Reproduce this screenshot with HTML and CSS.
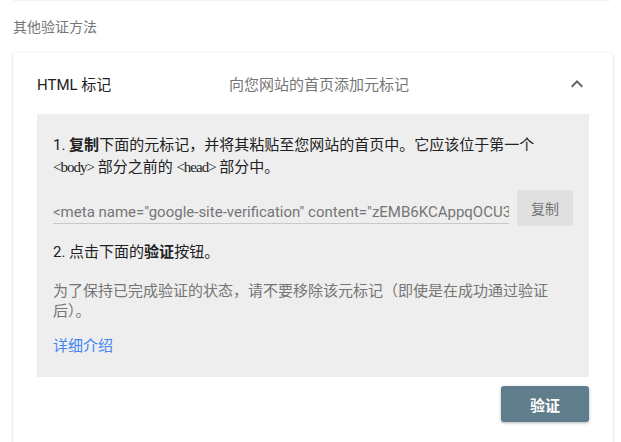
FILE: index.html
```html
<!DOCTYPE html>
<html lang="zh-CN">
<head>
<meta charset="utf-8">
<link rel="stylesheet" href="styles.css">
</head>
<body>
<div class="page">
  <div class="prev-card"></div>
  <h2 class="section-title">其他验证方法</h2>
  <div class="card">
    <div class="card-header">
      <div class="method-name">HTML 标记</div>
      <div class="method-desc">向您网站的首页添加元标记</div>
      <svg class="chevron" viewBox="0 0 24 24" width="24" height="24"><path d="M12 8l-6 6 1.41 1.41L12 10.83l4.59 4.58L18 14z" fill="#616161"/></svg>
    </div>
    <div class="instructions">
      <p class="step">1. <b>复制</b>下面的元标记，并将其粘贴至您网站的首页中。它应该位于第一个 <code>&lt;body&gt;</code> 部分之前的 <code>&lt;head&gt;</code> 部分中。</p>
      <div class="copy-row">
        <div class="meta-field">&lt;meta name="google-site-verification" content="zEMB6KCAppqOCU3rT8xYwq2LmN0pVbJk5sHdGf4cXe" /&gt;</div>
        <button class="copy-btn">复制</button>
      </div>
      <p class="step step2">2. 点击下面的<b>验证</b>按钮。</p>
      <p class="note">为了保持已完成验证的状态，请不要移除该元标记（即使是在成功通过验证后）。</p>
      <a class="more-link" href="#">详细介绍</a>
    </div>
    <div class="actions">
      <button class="verify-btn">验证</button>
    </div>
  </div>
</div>
</body>
</html>
```
FILE: styles.css
```css
html, body {
  margin: 0;
  padding: 0;
  background: #ffffff;
}
body {
  font-family: Roboto, "Noto Sans CJK SC", sans-serif;
  color: #212121;
  overflow: hidden;
  height: 442px;
}
.page {
  padding: 0 8px 0 13px;
}
.prev-card {
  height: 1px;
  background: #f2f2f2;
  margin-right: 3px;
}
.section-title {
  margin: 16px 0 16px 0;
  font-size: 14px;
  line-height: 20px;
  font-weight: 400;
  color: #757575;
}
.card {
  background: #fff;
  box-shadow: 0 1px 3px rgba(0,0,0,0.18), 0 0 1px rgba(0,0,0,0.12);
  border-radius: 2px;
  padding: 0 24px 20px 24px;
  height: 380px;
}
.card-header {
  height: 61px;
  display: flex;
  align-items: center;
  font-size: 15px;
}
.method-name {
  width: 192px;
  color: #212121;
}
.method-desc {
  flex: 1;
  color: #757575;
}
.chevron {
  display: block;
}
.instructions {
  background: #eeeeee;
  padding: 20px 16px 21px 16px;
}
.step {
  margin: 0;
  font-size: 15px;
  line-height: 22px;
  color: #212121;
}
.step b {
  font-weight: 700;
}
code {
  font-family: "Liberation Serif", serif;
  font-size: 15px;
  letter-spacing: -1px;
  line-height: 1;
}
.copy-row {
  margin-top: 12px;
  height: 36px;
  display: flex;
  align-items: flex-end;
  gap: 8px;
}
.meta-field {
  flex: 1;
  min-width: 0;
  white-space: nowrap;
  overflow: hidden;
  font-size: 15px;
  line-height: 20px;
  color: #757575;
  padding-bottom: 1px;
  border-bottom: 1px solid #c8c8c8;
  margin-bottom: 2px;
}
.copy-btn {
  align-self: stretch;
  width: 56px;
  border: none;
  border-radius: 3px;
  background: #e0e0e0;
  color: #757575;
  font-family: Roboto, "Noto Sans CJK SC", sans-serif;
  font-size: 14px;
  padding: 0;
}
.step2 {
  margin-top: 15px;
}
.note {
  margin: 18px 0 0 0;
  font-size: 15px;
  line-height: 20px;
  color: #757575;
}
.more-link {
  display: block;
  margin-top: 15px;
  font-size: 15px;
  line-height: 20px;
  color: #4285f4;
  text-decoration: none;
}
.actions {
  display: flex;
  justify-content: flex-end;
  margin-top: 9px;
}
.verify-btn {
  width: 88px;
  height: 36px;
  border: none;
  border-radius: 3px;
  background: #607d8b;
  color: #ffffff;
  font-family: Roboto, "Noto Sans CJK SC", sans-serif;
  font-size: 15px;
  font-weight: 700;
  box-shadow: 0 1px 3px rgba(0,0,0,0.3);
}
```
